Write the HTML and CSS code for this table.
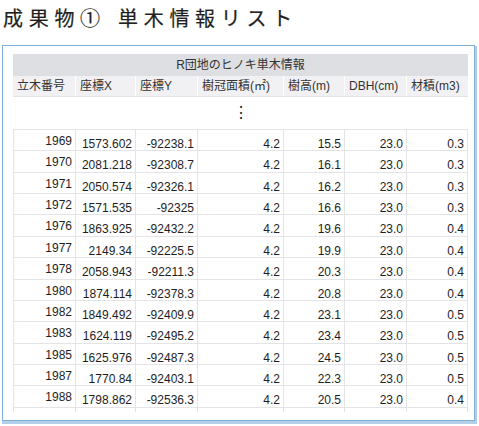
FILE: index.html
```html
<!DOCTYPE html>
<html lang="ja">
<head>
<meta charset="utf-8">
<title>成果物① 単木情報リスト</title>
<link rel="stylesheet" href="styles.css">
</head>
<body>
<h1 class="title">成果物① 単木情報リスト</h1>
<div class="frame">
  <div class="viewport">
    <div class="grid" role="table">
      <div class="caption" role="row">R団地のヒノキ単木情報</div>
      <div class="row head" role="row">
        <div class="cell">立木番号</div><div class="cell">座標X</div><div class="cell">座標Y</div><div class="cell">樹冠面積(㎡)</div><div class="cell">樹高(m)</div><div class="cell">DBH(cm)</div><div class="cell">材積(m3)</div>
      </div>
      <div class="more" role="row">⋮</div>
      <div class="row data" role="row"><div class="cell id">1969</div><div class="cell">1573.602</div><div class="cell">-92238.1</div><div class="cell">4.2</div><div class="cell">15.5</div><div class="cell">23.0</div><div class="cell">0.3</div></div>
      <div class="row data" role="row"><div class="cell id">1970</div><div class="cell">2081.218</div><div class="cell">-92308.7</div><div class="cell">4.2</div><div class="cell">16.1</div><div class="cell">23.0</div><div class="cell">0.3</div></div>
      <div class="row data" role="row"><div class="cell id">1971</div><div class="cell">2050.574</div><div class="cell">-92326.1</div><div class="cell">4.2</div><div class="cell">16.2</div><div class="cell">23.0</div><div class="cell">0.3</div></div>
      <div class="row data" role="row"><div class="cell id">1972</div><div class="cell">1571.535</div><div class="cell">-92325</div><div class="cell">4.2</div><div class="cell">16.6</div><div class="cell">23.0</div><div class="cell">0.3</div></div>
      <div class="row data" role="row"><div class="cell id">1976</div><div class="cell">1863.925</div><div class="cell">-92432.2</div><div class="cell">4.2</div><div class="cell">19.6</div><div class="cell">23.0</div><div class="cell">0.4</div></div>
      <div class="row data" role="row"><div class="cell id">1977</div><div class="cell">2149.34</div><div class="cell">-92225.5</div><div class="cell">4.2</div><div class="cell">19.9</div><div class="cell">23.0</div><div class="cell">0.4</div></div>
      <div class="row data" role="row"><div class="cell id">1978</div><div class="cell">2058.943</div><div class="cell">-92211.3</div><div class="cell">4.2</div><div class="cell">20.3</div><div class="cell">23.0</div><div class="cell">0.4</div></div>
      <div class="row data" role="row"><div class="cell id">1980</div><div class="cell">1874.114</div><div class="cell">-92378.3</div><div class="cell">4.2</div><div class="cell">20.8</div><div class="cell">23.0</div><div class="cell">0.4</div></div>
      <div class="row data" role="row"><div class="cell id">1982</div><div class="cell">1849.492</div><div class="cell">-92409.9</div><div class="cell">4.2</div><div class="cell">23.1</div><div class="cell">23.0</div><div class="cell">0.5</div></div>
      <div class="row data" role="row"><div class="cell id">1983</div><div class="cell">1624.119</div><div class="cell">-92495.2</div><div class="cell">4.2</div><div class="cell">23.4</div><div class="cell">23.0</div><div class="cell">0.5</div></div>
      <div class="row data" role="row"><div class="cell id">1985</div><div class="cell">1625.976</div><div class="cell">-92487.3</div><div class="cell">4.2</div><div class="cell">24.5</div><div class="cell">23.0</div><div class="cell">0.5</div></div>
      <div class="row data" role="row"><div class="cell id">1987</div><div class="cell">1770.84</div><div class="cell">-92403.1</div><div class="cell">4.2</div><div class="cell">22.3</div><div class="cell">23.0</div><div class="cell">0.5</div></div>
      <div class="row data" role="row"><div class="cell id">1988</div><div class="cell">1798.862</div><div class="cell">-92536.3</div><div class="cell">4.2</div><div class="cell">20.5</div><div class="cell">23.0</div><div class="cell">0.4</div></div>
      <div class="row data cut" role="row"><div class="cell"></div><div class="cell"></div><div class="cell"></div><div class="cell"></div><div class="cell"></div><div class="cell"></div><div class="cell"></div></div>
    </div>
  </div>
</div>
</body>
</html>
```
FILE: styles.css
```css
*, *::before, *::after {
  box-sizing: border-box;
}

html, body {
  margin: 0;
  padding: 0;
  background: #ffffff;
}

body {
  width: 479px;
  height: 426px;
  overflow: hidden;
  font-family: "Liberation Sans", "Noto Sans CJK JP", sans-serif;
  color: #1e1e1e;
}

.title {
  margin: 8px 0 0 3px;
  height: 37px;
  font-family: "Noto Sans CJK JP", sans-serif;
  font-weight: 400;
  font-size: 20px;
  line-height: 20px;
  letter-spacing: 5.7px;
  word-spacing: 2px;
  color: #231f20;
  white-space: pre;
  -webkit-text-stroke: 0.2px #231f20;
}

.frame {
  margin-left: 2px;
  width: 473px;
  border: 1px solid #80b0da;
  box-shadow: 1px 2px 0 1px #b2cfe7;
  padding: 8px 6px 8px 10px;
}

.viewport {
  height: 358px;
  overflow: hidden;
}

.grid {
  width: 455px;
  font-size: 12px;
}

.caption {
  height: 22px;
  background: #dedfe2;
  color: #333333;
  text-align: center;
  line-height: 22px;
}

.row {
  display: grid;
  grid-template-columns: 63px 60px 62px 86px 61px 62px 61px;
}

.head {
  height: 21px;
  background: #f1f1f3;
  border-bottom: 1px solid #e4e4e6;
}

.head .cell {
  padding: 0 2px 0 4px;
  line-height: 21px;
  color: #333333;
  white-space: nowrap;
  overflow: hidden;
  border-right: 1px solid #ffffff;
}

.head .cell:last-child {
  border-right: none;
}

.more {
  height: 33px;
  border-bottom: 1px solid #e4e4e6;
  text-align: center;
  font-size: 16px;
  line-height: 31px;
  color: #222222;
}

.data {
  height: 21.36px;
}

.data .cell {
  border-right: 1px solid #e4e4e6;
  border-bottom: 1px solid #e4e4e6;
  text-align: right;
  line-height: 13px;
  padding: 8px 3px 0 3px;
  white-space: nowrap;
  overflow: hidden;
}

.data .cell:first-child {
  border-left: 1px solid #e4e4e6;
}

.data .cell.id {
  padding-top: 5px;
}
```
